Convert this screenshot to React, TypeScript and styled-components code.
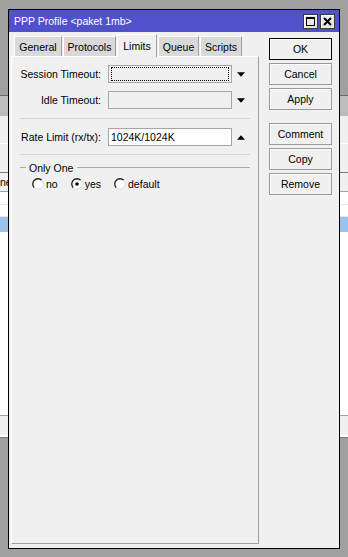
import React from "react";
import styled, { createGlobalStyle } from "styled-components";

const GlobalStyle = createGlobalStyle`
  html, body { margin: 0; padding: 0; background: #a0a0a0; }
  body {
    font-family: "Liberation Sans", Arial, sans-serif;
    font-size: 10.5px;
    color: #000;
  }
  * { box-sizing: border-box; }
`;

const Desktop = styled.div`
  position: relative;
  width: 348px;
  height: 557px;
  overflow: hidden;
  background: #a0a0a0;
  display: flex;
  flex-direction: column;
`;

/* ---------- window behind the dialog ---------- */
const BackWindow = styled.div`
  margin-top: 95px;
  height: 343px;
  display: flex;
  flex-direction: column;
  border-top: 1px solid #6a6a6a;
  border-bottom: 1px solid #7a7a7a;
`;

const BackToolbar = styled.div`
  height: 20px;
  background: #bcbcbc;
`;

const BackBand = styled.div<{ $line?: boolean }>`
  height: 28px;
  background: #f0f0f0;
  border-bottom: 1px solid ${(p) => (p.$line ? "#ffffff" : "#f0f0f0")};
`;

const BackHeader = styled.div`
  height: 20px;
  display: flex;
  align-items: center;
  background: #f0f0f0;
  border-top: 1px solid #7a7a7a;
  border-bottom: 1px solid #a0a0a0;
  overflow: hidden;
`;

const HeaderCell = styled.span`
  white-space: nowrap;
`;

const BackRow = styled.div<{ $h: number; $sel?: boolean }>`
  height: ${(p) => p.$h}px;
  background: ${(p) => (p.$sel ? "#9cc1ec" : "#ffffff")};
  border-bottom: 1px solid ${(p) => (p.$sel ? "#9cc1ec" : "#e6e6e6")};
`;

const BackFill = styled.div`
  flex: 1;
  background: #ffffff;
`;

const BackStatus = styled.div`
  height: 22px;
  background: #f0f0f0;
  border-top: 1px solid #a0a0a0;
  border-bottom: 2px solid #ffffff;
`;

/* ---------- dialog ---------- */
const Dialog = styled.div`
  position: absolute;
  left: 8px;
  top: 9px;
  width: 332px;
  height: 540px;
  border: 1px solid #000;
  background: #f0f0f0;
  display: flex;
  flex-direction: column;
`;

const TitleBar = styled.div`
  height: 22px;
  flex: none;
  background: #5151c9;
  color: #fff;
  display: flex;
  align-items: center;
  padding: 0 4px 0 5px;
`;

const TitleText = styled.div`
  flex: 1;
  white-space: nowrap;
  font-size: 10.5px;
`;

const TitleButtons = styled.div`
  display: flex;
  gap: 2px;
`;

const TitleButton = styled.div`
  width: 15px;
  height: 15px;
  background: #e8e8e8;
  border: 1px solid #3a3a3a;
  box-shadow: inset 1px 1px 0 #ffffff;
  display: flex;
  align-items: center;
  justify-content: center;
`;

const Body = styled.div`
  flex: 1;
  display: flex;
  gap: 10px;
  padding: 2px 7px 4px 2px;
  min-height: 0;
`;

const LeftCol = styled.div`
  width: 248px;
  display: flex;
  flex-direction: column;
`;

const TabStrip = styled.div`
  height: 22px;
  flex: none;
  display: flex;
  align-items: flex-end;
  gap: 1px;
  padding-left: 3px;
  position: relative;
  z-index: 1;
`;

const Tab = styled.div<{ $w: number; $active?: boolean }>`
  width: ${(p) => p.$w}px;
  height: ${(p) => (p.$active ? 23 : 20)}px;
  margin-bottom: ${(p) => (p.$active ? -1 : 0)}px;
  background: ${(p) => (p.$active ? "#f0f0f0" : "#d9d9d9")};
  border: 1px solid;
  border-color: #ffffff #a0a0a0 transparent #ffffff;
  border-bottom: none;
  display: flex;
  align-items: center;
  justify-content: center;
  white-space: nowrap;
`;

const Panel = styled.div`
  flex: 1;
  border: 1px solid;
  border-color: #ffffff #a0a0a0 #a0a0a0 #ffffff;
  padding: 8px 8px 0 8px;
  display: flex;
  flex-direction: column;
`;

const FormRow = styled.div<{ $mt?: number }>`
  height: 18px;
  display: flex;
  align-items: center;
  margin-top: ${(p) => p.$mt ?? 0}px;
`;

const Label = styled.div`
  width: 81px;
  margin-right: 7px;
  text-align: right;
  white-space: nowrap;
`;

const Field = styled.div<{ $white?: boolean }>`
  width: 124px;
  height: 18px;
  border: 1px solid #a6a6a6;
  background: ${(p) => (p.$white ? "#ffffff" : "#f0f0f0")};
  padding: 1px 2px;
  display: flex;
  align-items: center;
  white-space: nowrap;
`;

const FocusRing = styled.div`
  flex: 1;
  align-self: stretch;
  border: 1px dotted #000;
`;

const ArrowBox = styled.div`
  width: 13px;
  padding-left: 5px;
  display: flex;
  align-items: center;
`;

const Separator = styled.div<{ $mt: number; $mb: number }>`
  height: 1px;
  background: #d6d6d6;
  margin-top: ${(p) => p.$mt}px;
  margin-bottom: ${(p) => p.$mb}px;
`;

const GroupTitle = styled.div`
  height: 13px;
  margin-top: 6px;
  display: flex;
  align-items: center;
  gap: 3px;
`;

const GroupLine = styled.div<{ $w?: number }>`
  height: 1px;
  background: #a8a8a8;
  ${(p) => (p.$w ? `width: ${p.$w}px;` : "flex: 1; margin-left: 1px;")}
`;

const RadioRow = styled.div`
  height: 13px;
  margin-top: 3px;
  padding-left: 12px;
  display: flex;
  align-items: center;
  gap: 13px;
`;

const RadioItem = styled.label`
  display: flex;
  align-items: center;
  gap: 2px;
  white-space: nowrap;
`;

const ButtonCol = styled.div`
  width: 63px;
  padding-top: 4px;
  display: flex;
  flex-direction: column;
  gap: 3px;
`;

const Button = styled.div<{ $default?: boolean; $mt?: number }>`
  height: 22px;
  border: 1px solid ${(p) => (p.$default ? "#000000" : "#9a9a9a")};
  background: #f0f0f0;
  box-shadow: inset 1px 1px 0 #fbfbfb;
  display: flex;
  align-items: center;
  justify-content: center;
  margin-top: ${(p) => p.$mt ?? 0}px;
  white-space: nowrap;
`;

const Triangle = ({ up }: { up?: boolean }) => (
  <svg width="9" height="5" viewBox="0 0 9 5">
    <polygon points={up ? "0,5 9,5 4.5,0" : "0,0 9,0 4.5,5"} fill="#000" />
  </svg>
);

const Radio = ({ checked }: { checked?: boolean }) => (
  <svg width="12" height="12" viewBox="0 0 12 12">
    <circle cx="6" cy="6" r="5" fill="#ffffff" />
    <path d="M2.3 9.7 A5 5 0 0 1 9.7 2.3" stroke="#1a1a1a" strokeWidth="1.3" fill="none" />
    <path d="M9.7 2.3 A5 5 0 0 1 2.3 9.7" stroke="#e0e0e0" strokeWidth="1" fill="none" />
    {checked && <circle cx="6" cy="6" r="1.8" fill="#000" />}
  </svg>
);

const MaxIcon = () => (
  <svg width="11" height="11" viewBox="0 0 11 11">
    <rect x="1.5" y="1.5" width="8" height="8" fill="none" stroke="#000" />
    <rect x="1" y="1" width="9" height="2" fill="#000" />
  </svg>
);

const CloseIcon = () => (
  <svg width="11" height="11" viewBox="0 0 11 11">
    <path d="M2 2 L9 9 M9 2 L2 9" stroke="#000" strokeWidth="2" />
  </svg>
);

const tabs = [
  { name: "General", w: 48 },
  { name: "Protocols", w: 53 },
  { name: "Limits", w: 40, active: true },
  { name: "Queue", w: 41 },
  { name: "Scripts", w: 42 },
];

export default function App() {
  return (
    <>
      <GlobalStyle />
      <Desktop>
        <BackWindow>
          <BackToolbar />
          <BackBand $line />
          <BackBand />
          <BackHeader>
            <HeaderCell>ne</HeaderCell>
          </BackHeader>
          <BackRow $h={13} />
          <BackRow $h={12} />
          <BackRow $h={15} $sel />
          <BackFill />
          <BackStatus />
        </BackWindow>

        <Dialog>
          <TitleBar>
            <TitleText>PPP Profile &lt;paket 1mb&gt;</TitleText>
            <TitleButtons>
              <TitleButton>
                <MaxIcon />
              </TitleButton>
              <TitleButton>
                <CloseIcon />
              </TitleButton>
            </TitleButtons>
          </TitleBar>
          <Body>
            <LeftCol>
              <TabStrip>
                {tabs.map((t) => (
                  <Tab key={t.name} $w={t.w} $active={t.active}>
                    {t.name}
                  </Tab>
                ))}
              </TabStrip>
              <Panel>
                <FormRow>
                  <Label>Session Timeout:</Label>
                  <Field>
                    <FocusRing />
                  </Field>
                  <ArrowBox>
                    <Triangle />
                  </ArrowBox>
                </FormRow>
                <FormRow $mt={8}>
                  <Label>Idle Timeout:</Label>
                  <Field />
                  <ArrowBox>
                    <Triangle />
                  </ArrowBox>
                </FormRow>
                <Separator $mt={9} $mb={9} />
                <FormRow>
                  <Label>Rate Limit (rx/tx):</Label>
                  <Field $white>1024K/1024K</Field>
                  <ArrowBox>
                    <Triangle up />
                  </ArrowBox>
                </FormRow>
                <Separator $mt={8} $mb={0} />
                <GroupTitle>
                  <GroupLine $w={6} />
                  <span>Only One</span>
                  <GroupLine />
                </GroupTitle>
                <RadioRow>
                  <RadioItem>
                    <Radio />
                    no
                  </RadioItem>
                  <RadioItem>
                    <Radio checked />
                    yes
                  </RadioItem>
                  <RadioItem>
                    <Radio />
                    default
                  </RadioItem>
                </RadioRow>
              </Panel>
            </LeftCol>
            <ButtonCol>
              <Button $default>OK</Button>
              <Button>Cancel</Button>
              <Button>Apply</Button>
              <Button $mt={10}>Comment</Button>
              <Button>Copy</Button>
              <Button>Remove</Button>
            </ButtonCol>
          </Body>
        </Dialog>
      </Desktop>
    </>
  );
}
